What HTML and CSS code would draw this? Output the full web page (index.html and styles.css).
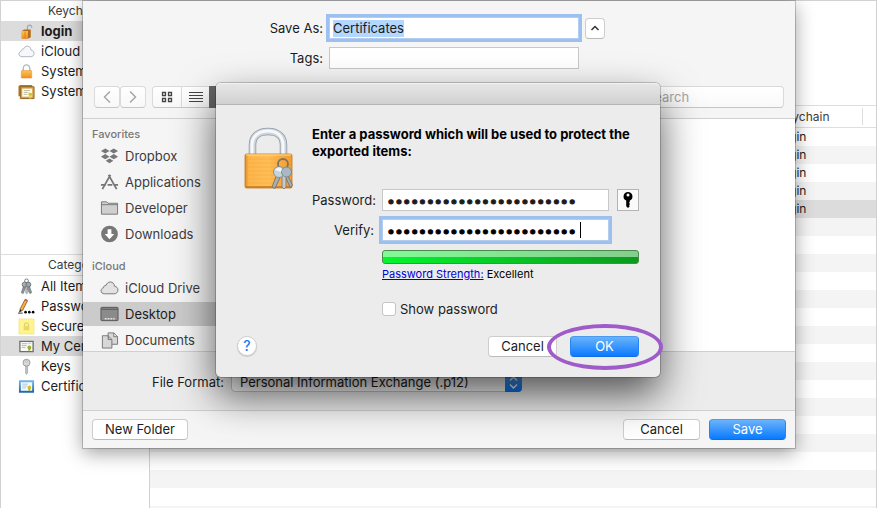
FILE: index.html
```html
<!DOCTYPE html>
<html lang="en">
<head>
<meta charset="utf-8">
<title>Keychain Access</title>
<link rel="stylesheet" href="styles.css">
</head>
<body>
<svg class="defs" aria-hidden="true">
  <defs>
    <linearGradient id="gold" x1="0" x2="0" y1="0" y2="1"><stop offset="0" stop-color="#ffc356"/><stop offset="1" stop-color="#f08d1c"/></linearGradient>
    <linearGradient id="goldside" x1="0" x2="1" y1="0" y2="0"><stop offset="0" stop-color="#d98a24"/><stop offset=".08" stop-color="#fdb64a"/><stop offset=".5" stop-color="#ffbe55"/><stop offset="1" stop-color="#f09a2c"/></linearGradient>
    <linearGradient id="blue" x1="0" x2="0" y1="0" y2="1"><stop offset="0" stop-color="#6fb3ef"/><stop offset="1" stop-color="#2467ae"/></linearGradient>
    <symbol id="cloud" viewBox="0 0 18 14"><path d="M4.3 12.5C2.3 12.5 1 11.3 1 9.6 1 8.1 2 7 3.4 6.8 3.3 5.2 4.4 4.3 5.8 4.5 6.4 2.6 7.9 1.3 9.7 1.3c2.3 0 4 1.7 4 4.1 2 .1 3.3 1.6 3.3 3.5 0 2.1-1.5 3.6-3.6 3.6z"/></symbol>
  </defs>
</svg>

<main class="window">
  <aside class="sidebar">
    <section class="keychains">
      <h2>Keychains</h2>
      <ul>
        <li class="selected"><svg viewBox="0 0 16 18"><path d="M9 8V4a2.300 2.300 0 0 1 4.500 0v1" fill="none" stroke="#9aa7b6" stroke-width="1.300"/><path d="M3 8.500L5.500 7h7v8L10 16.500H3z" fill="#b56a17"/><path d="M3 8.500h6.500v8H3z" fill="url(#gold)"/><path d="M6.500 9v7" stroke="#c97a1c" stroke-width=".8"/></svg>login</li>
        <li><svg viewBox="0 0 18 14"><use href="#cloud" fill="#f5f7fa" stroke="#acb3be"/></svg>iCloud</li>
        <li><svg viewBox="0 0 16 18"><path d="M4.500 9V6a3.500 4 0 0 1 7 0v3" fill="none" stroke="#aeb8c4" stroke-width="1.500"/><rect x="2.500" y="8" width="11" height="8" rx=".5" fill="url(#gold)" stroke="#dd8c27" stroke-width=".5"/></svg>System</li>
        <li><svg viewBox="0 0 18 18"><path d="M.500 3.500L2 2h13v12H.500z" fill="#ae7929"/><path d="M2.500 4h14.500v12.500H2.500z" fill="#d3a148" stroke="#93641e"/><path d="M4.500 6h10.500v8.500H4.500z" fill="#fffef2"/><path d="M6 8h7M6 10h5M6 12h4" stroke="#b9b9a5"/><circle cx="13" cy="12" r="2" fill="#cfc23b"/><path d="M12 13v4l1-1 1 1v-4" fill="#e3ce55"/></svg>System Roots</li>
      </ul>
    </section>
    <section class="categories">
      <h2>Category</h2>
      <ul>
        <li><svg viewBox="0 0 18 18"><circle cx="9" cy="3" r="2" fill="none" stroke="#777" stroke-width="1"/><path d="M6 8L3.500 15.500l2 1 3-7.500 4 7.500 2-1L11.500 7z" fill="#8d9498" stroke="#60676b" stroke-width=".6"/><circle cx="7" cy="7" r="2.600" fill="#a8afb3" stroke="#5d6568" stroke-width=".8"/><circle cx="11" cy="7" r="2.600" fill="#9da5a9" stroke="#5d6568" stroke-width=".8"/><path d="M8.200 9v7l1 1 .8-1V9z" fill="#bcc3c7" stroke="#737b7e" stroke-width=".5"/></svg>All Items</li>
        <li><svg viewBox="0 0 18 18"><path d="M1.500 15l1-4L7.500 1.500l2.500 1.500L5 13z" fill="#f6b238" stroke="#7a4d21" stroke-width=".8"/><path d="M7 2.300L8 .800l2.500 1.500-1 1.500z" fill="#d85548"/><path d="M1.500 15l1-3 1.500 1z" fill="#222"/><path d="M0 16h5" stroke="#333"/><circle cx="8" cy="15" r="1.400"/><circle cx="12" cy="15" r="1.400"/><circle cx="16" cy="15" r="1.400"/></svg>Passwords</li>
        <li><svg viewBox="0 0 18 18"><path d="M1 1h16v16H1z" fill="#fff58c" stroke="#eadf7c" stroke-width=".6"/><path d="M7 9V7a2 2 0 0 1 4 0v2" fill="none" stroke="#d9d07a" stroke-width="1.200"/><path d="M6 8.500h6v4.500H6z" fill="#ead76c"/></svg>Secure Notes</li>
        <li class="selected"><svg viewBox="0 0 18 18"><path d="M2 3.500h14v11H2z" fill="#f8f8f4" stroke="#6d706e" stroke-width="1.400"/><path d="M4 6h6M4 8h5M4 10h4" stroke="#b2b9ba"/><path d="M11 5.500h3" stroke="#b5bbbb"/><circle cx="12" cy="10" r="2" fill="#9ead36"/><path d="M11 11v3l1-1 1 1v-3" fill="#9aa438"/></svg>My Certificates</li>
        <li><svg viewBox="0 0 18 18"><path d="M8 7h2.200v9L9 17.500 8 16z" fill="#bfc2c4" stroke="#84888a" stroke-width=".5"/><circle cx="9" cy="5" r="3.700" fill="#d6d8da" stroke="#868a8d" stroke-width=".8"/><circle cx="9" cy="3.500" r="1" fill="#fff" stroke="#888" stroke-width=".5"/></svg>Keys</li>
        <li><svg viewBox="0 0 18 18"><path d="M2 3.500h14v11H2z" fill="#f7fcff" stroke="url(#blue)" stroke-width="2"/><path d="M4.500 6.500h6M4.500 8.500h5M4.500 10.500h4" stroke="#a9c2d8"/><circle cx="12" cy="10" r="2" fill="#c9c63a"/><path d="M11 11v3l1-1 1 1v-3" fill="#acae37"/></svg>Certificates</li>
      </ul>
    </section>
  </aside>
  <section class="content">
    <table>
      <thead><tr><th></th><th class="kc">Keychain</th><th class="end"></th></tr></thead>
      <tbody>
        <tr><td></td><td class="kc">login</td><td></td></tr>
        <tr><td></td><td class="kc">login</td><td></td></tr>
        <tr><td></td><td class="kc">login</td><td></td></tr>
        <tr><td></td><td class="kc">login</td><td></td></tr>
        <tr class="selected"><td></td><td class="kc">login</td><td></td></tr>
      </tbody>
    </table>
    <div class="stripes"></div>
  </section>
</main>

<section class="sheet" aria-label="Save">
  <form class="save-form">
    <label for="saveas">Save As:</label>
    <input id="saveas" class="field focus highlighted" type="text" value="Certificates">
    <button type="button" class="btn collapse" aria-label="Collapse"><svg viewBox="0 0 10 8"><path d="M1.500 6L5 2.500 8.500 6" fill="none" stroke="#333" stroke-width="1.500"/></svg></button>
    <label for="tags">Tags:</label>
    <input id="tags" class="field" type="text">
  </form>
  <div class="toolbar">
    <div class="nav">
      <button type="button" aria-label="Back"><svg viewBox="0 0 10 14"><path d="M8 1.500L2.500 7 8 12.500" fill="none" stroke="#a6a6a6" stroke-width="1.500"/></svg></button>
      <button type="button" aria-label="Forward"><svg viewBox="0 0 10 14"><path d="M2 1.500L7.500 7 2 12.500" fill="none" stroke="#a6a6a6" stroke-width="1.500"/></svg></button>
    </div>
    <div class="views">
      <button type="button" aria-label="Icons"><svg viewBox="0 0 12 12"><path d="M1.500 1.500h3v3h-3zM7.500 1.500h3v3h-3zM1.500 7.500h3v3h-3zM7.500 7.500h3v3h-3z" fill="none" stroke="#444" stroke-width="1.300"/></svg></button>
      <button type="button" aria-label="List"><svg class="list" viewBox="0 0 14 12"><path d="M0 1.500h14M0 4.500h14M0 7.500h14M0 10.500h14" stroke="#444"/></svg></button>
      <button type="button" class="on" aria-label="Columns"><svg class="list" viewBox="0 0 14 12"><path d="M.5.500h13v11H.5zM5 1v10M9.500 1v10" fill="none" stroke="#fff"/></svg></button>
    </div>
    <input class="search" type="text" placeholder="Search" aria-label="Search">
  </div>
  <div class="browser">
    <nav class="places">
      <h3>Favorites</h3>
      <a href="#"><svg viewBox="0 0 20 18" fill="#777"><path d="M5.500 1L1 3.700l4.500 2.700L10 3.700zM14.500 1L10 3.700l4.500 2.700L19 3.700zM5.500 7L1 9.700l4.500 2.700L10 9.700zM14.500 7L10 9.700l4.500 2.700L19 9.700zM10 11.500l-4 2.500 4 2.700 4-2.700z"/></svg>Dropbox</a>
      <a href="#"><svg viewBox="0 0 20 18" fill="none" stroke="#777"><path d="M9 1.500l8.500 15M11 1.500L2.500 16.500" stroke-width="1.900"/><path d="M1 12h5M8 12h5M15 12h4" stroke-width="1.800"/></svg>Applications</a>
      <a href="#"><svg viewBox="0 0 20 18" fill="#cfcfcf" stroke="#777"><path d="M1.500 15.500v-13h5.500l1.500 1.500h10v11.500zM1.500 5.500h17"/></svg>Developer</a>
      <a href="#"><svg viewBox="0 0 20 18"><circle cx="10" cy="9" r="8.800" fill="#777"/><path d="M8 4h4v5h3l-5 5.500L5 9h3z" fill="#fff"/></svg>Downloads</a>
      <h3 class="next">iCloud</h3>
      <a href="#"><svg viewBox="0 0 18 14"><use href="#cloud" fill="#e2e2e2" stroke="#777" stroke-width=".9"/></svg>iCloud Drive</a>
      <a href="#" class="selected"><svg viewBox="0 0 20 18"><rect x="1" y="2" width="18" height="14" rx="1" fill="#8b8b8b" stroke="#555"/><path d="M1.500 4h17" stroke="#555"/><path d="M5 14h2M8 14h2M11 14h2M14 14h1.500" stroke="#e5e5e5" stroke-width="1.500"/></svg>Desktop</a>
      <a href="#"><svg viewBox="0 0 20 18" fill="#d7d7d7" stroke="#777"><path d="M8.500 1.500h6l4 4v8h-10zM14.500 1.500v4h4"/><path d="M2.500 4.500h6l4 4v9h-10zM8.500 4.500v4h4"/></svg>Documents</a>
    </nav>
    <div class="files"></div>
  </div>
  <div class="format">
    <label for="format">File Format:</label>
    <span class="picker">
      <select id="format"><option>Personal Information Exchange (.p12)</option></select>
      <svg viewBox="0 0 17 19"><path d="M5 7.500l3.500-3.500L12 7.500M5 11.500l3.500 3.500 3.500-3.500" fill="none" stroke="#fff" stroke-width="1.500"/></svg>
    </span>
  </div>
  <footer>
    <button type="button" class="btn new">New Folder</button>
    <button type="button" class="btn wide">Cancel</button>
    <button type="button" class="btn wide primary">Save</button>
  </footer>
</section>

<div class="layer">
  <section class="dialog" role="dialog" aria-labelledby="prompt">
    <div class="titlebar"></div>
    <div class="dialog-body">
      <svg class="lock" viewBox="0 0 49 64">
        <path d="M8.500 29V19C8.500 10 15 5.500 24 5.500S39.500 10 39.500 19v10" fill="none" stroke="#8f97a1" stroke-width="7.500"/>
        <path d="M8.500 29V19C8.500 10 15 5.500 24 5.500S39.500 10 39.500 19v10" fill="none" stroke="#cdd4dc" stroke-width="6"/>
        <path d="M8 29V19C8 10 15 5 24 5S39 10 39 19v10" fill="none" stroke="#f6f8fb" stroke-width="3"/>
        <rect x="1" y="28" width="47" height="34" rx="1.500" fill="url(#goldside)" stroke="#c97a1c" stroke-width=".8"/>
        <path d="M2 29h45" stroke="#ffdc97" stroke-width="1.200"/>
        <path d="M2 33h45M2 37h45M2 41h45M2 45h45M2 49h45M2 53h45M2 57h45" stroke="#f5aa42" stroke-width=".6"/>
        <path d="M2 61h45" stroke="#c6761c" stroke-width="1.500"/>
        <circle cx="39" cy="38" r="5" fill="none" stroke="#7c7462" stroke-width="1.800"/>
        <path d="M33 48l-5 13 3 1.500 6-13zM43 48l5.500 11-2 3-6-13z" fill="#a8adb1" stroke="#6b6b69" stroke-width=".8"/>
        <path d="M38 47h4v14l-2 2-2-2z" fill="#c5c9cc" stroke="#757674" stroke-width=".8"/>
        <circle cx="35" cy="46" r="5.500" fill="#c5d3dc" stroke="#7c858b" stroke-width=".8"/>
        <circle cx="42.500" cy="46" r="5" fill="#a9b9c3" stroke="#737f86" stroke-width=".8"/>
        <path d="M31 44c2-3 5-3 7-1l-1 3c-2-1-4-1-6-2z" fill="#eff5f8"/>
      </svg>
      <form class="credentials">
        <h1 id="prompt">Enter a password which will be used to protect the exported items:</h1>
        <div class="rows">
          <label for="pw">Password:</label>
          <input id="pw" class="field secret" type="password" value="abcdefghijklmnopqrstuvwx">
          <button type="button" class="key" aria-label="Password Assistant"><svg viewBox="0 0 12 18"><path fill-rule="evenodd" d="M6 1a4.500 4.500 0 0 1 1.800 8.600V11l-.8.800.8.900v.800l-.8.800.8.900-1.800 1.800-1.800-1.800V9.600A4.500 4.500 0 0 1 6 1zM6 2.500a1.500 1.500 0 1 0 0 3 1.500 1.500 0 1 0 0-3z"/></svg></button>
          <label for="verify">Verify:</label>
          <span class="verify"><input id="verify" class="field secret focus" type="password" value="abcdefghijklmnopqrstuvwx"><i class="caret"></i></span>
        </div>
        <div class="indent">
          <div class="meter" role="meter" aria-label="Password strength" aria-valuenow="100"></div>
          <p class="strength"><a href="#">Password Strength:</a> Excellent</p>
          <label class="show"><input type="checkbox">Show password</label>
        </div>
      </form>
    </div>
    <footer>
      <button type="button" class="help" aria-label="Help">?</button>
      <button type="button" class="btn cancel">Cancel</button>
      <span class="ok"><button type="button" class="btn primary">OK</button><span class="ring"></span></span>
    </footer>
  </section>
</div>
</body>
</html>
```
FILE: styles.css
```css
* { box-sizing: border-box; }
body {
  margin: 0;
  position: relative;
  min-height: 100vh;
  overflow: hidden;
  font: 13px/20px Inter, "Liberation Sans", sans-serif;
  color: #1c1c1c;
  background: #fff;
}
h1, h2, h3, p, ul { margin: 0; padding: 0; }
ul { list-style: none; }
button, input, select { font: inherit; color: inherit; margin: 0; padding: 0; }
svg { flex: none; display: block; }
.defs { position: absolute; width: 0; height: 0; }

/* Main window */
.window {
  display: flex;
  height: 100vh;
  border: 1px solid #d2d2d2;
  border-bottom: 0;
}
.sidebar { width: 149px; flex: none; border-right: 1px solid #d2d2d2; overflow: hidden; }
.sidebar h2 { font-size: 12px; font-weight: 400; line-height: 20px; padding-left: 47px; color: #3c3c3c; }
.sidebar li { display: flex; align-items: center; gap: 6px; height: 20px; padding-left: 17px; white-space: nowrap; }
.sidebar li svg { width: 17px; height: 17px; }
.sidebar .selected { background: #dcdcdc; }
.keychains { height: 253px; }
.keychains h2 { height: 20px; }
.keychains .selected { font-weight: 700; }
.categories { border-top: 1px solid #dedede; }
.categories h2 { height: 21px; border-bottom: 1px solid #dedede; }
.content { flex: 1; display: flex; flex-direction: column; padding-top: 104px; min-width: 0; }
table { width: 100%; border-collapse: separate; border-spacing: 0; table-layout: fixed; font-size: 12px; }
th { height: 23px; padding: 0; font-weight: 400; line-height: 20px; text-align: left; border: solid #dedede; border-width: 1px 0; color: #3c3c3c; }
td { height: 18px; padding: 0; line-height: 18px; }
.kc { width: 85px; padding-left: 1px; }
td.kc { padding-left: 2px; }
th.end { background: linear-gradient(#dedede, #dedede) 0 50% / 1px 17px no-repeat; }
tr > :last-child { width: 14px; }
tbody tr:nth-child(even) { background: #f4f4f4; }
tbody tr.selected { background: #dcdcdc; }
.stripes { flex: 1; background: repeating-linear-gradient(#f4f4f4 0 18px, #fff 18px 36px); }

/* Shared controls */
.field { height: 22px; padding: 0 4px; border: 1px solid #c8c8c8; border-radius: 0; background: #fff; outline: 0; }
.focus { box-shadow: 0 0 0 3px #9cc0f0; border-color: #b4cdee; }
.highlighted { background: linear-gradient(#b3d7ff, #b3d7ff) 3px 2px / 71px 17px no-repeat #fff; padding: 0 3px; }
.btn {
  height: 21px;
  line-height: 19px;
  border: 1px solid #cdcdcd;
  border-bottom-color: #bababa;
  border-radius: 4px;
  background: #fff;
  text-align: center;
}
.primary { color: #fff; border-color: #4b9bf5 #2585f6 #0f6de8; background: linear-gradient(#6ab3fa, #0a7aff); }

/* Save sheet */
.sheet {
  position: absolute;
  top: 1px;
  left: 83px;
  right: 82px;
  background: #f5f5f5;
  box-shadow: 0 0 0 1px rgba(0, 0, 0, .2), 0 5px 18px rgba(0, 0, 0, .38);
}
.save-form {
  display: grid;
  grid-template-columns: minmax(0, 1fr) 250px minmax(0, 1fr);
  gap: 8px 6px;
  padding: 16px 0 0 30px;
  align-items: center;
}
.save-form label { text-align: right; }
.collapse { width: 20px; display: grid; place-items: center; }
.collapse svg { width: 10px; height: 8px; }
.toolbar { display: flex; padding: 17px 11px 10px; border-bottom: 1px solid #d0d0d0; }
.toolbar button { height: 22px; display: grid; place-items: center; border: 1px solid #dadada; border-bottom-color: #c6c6c6; border-radius: 4px; background: linear-gradient(#fff, #f8f8f8); }
.nav { display: flex; margin-right: 6px; }
.nav button { width: 26px; }
.nav svg { width: 10px; height: 14px; }
.views { display: flex; flex: none; }
.views button { width: 29px; border-radius: 0; margin-right: -1px; }
.views button:first-child { width: 30px; border-radius: 4px 0 0 4px; }
.views svg { width: 12px; height: 12px; }
.views .list { width: 14px; }
.views .on { background: #666; border-color: #666; }
.search { height: 22px; width: 150px; margin-left: auto; padding-left: 11px; border: 1px solid #dadada; border-bottom-color: #c6c6c6; border-radius: 4px; background: linear-gradient(#fff, #f9f9f9); }
.search::placeholder { color: #a6a6a6; opacity: 1; }
.browser { display: flex; height: 232px; overflow: hidden; }
.places { width: 160px; flex: none; padding-top: 5px; border-right: 1px solid #ccc; background: #f5f5f5; }
.places h3 { height: 18px; padding-left: 9px; font-size: 11px; line-height: 20px; font-weight: 500; color: #777; }
.places .next { margin-top: 10px; }
.places a { display: flex; align-items: center; gap: 6px; height: 24px; margin: 2px 0; padding-left: 17px; color: #3c3c3c; text-decoration: none; white-space: nowrap; }
.places a svg { width: 19px; height: 18px; }
.places .selected { background: #cbcbcb; color: #1c1c1c; }
.files { flex: 1; background: #fff; }
.format { display: flex; align-items: center; gap: 7px; height: 60px; padding: 2px 0 0 69px; background: #ececec; border: solid #d0d0d0; border-width: 1px 0; }
.picker { position: relative; width: 291px; }
.picker select { display: block; width: 100%; height: 19px; padding-left: 8px; border: 1px solid #c6c6c6; border-radius: 4px; background: #fff; appearance: none; line-height: 17px; }
.picker svg { position: absolute; right: 0; top: 0; width: 17px; height: 19px; border-radius: 0 4px 4px 0; background: linear-gradient(#5ca9f8, #0a72f0); pointer-events: none; }
.sheet footer { display: flex; gap: 9px; padding: 8px 9px; }
.new { width: 96px; margin-right: auto; }
.wide { width: 77px; }

/* Password dialog */
.layer { position: absolute; top: 83px; left: 0; right: 1px; display: flex; justify-content: center; }
.dialog { width: 444px; border-radius: 5px; background: #ececec; box-shadow: 0 0 0 1px rgba(0, 0, 0, .2), 0 18px 40px rgba(0, 0, 0, .65); }
.titlebar { height: 22px; border-radius: 5px 5px 0 0; border-bottom: 1px solid #b6b6b6; border-top: 1px solid #f2f2f2; background: linear-gradient(#e6e6e6, #d1d1d1); }
.dialog-body { display: flex; gap: 19px; padding: 21px 21px 0 28px; }
.lock { width: 49px; height: 64px; }
.credentials { flex: 1; min-width: 0; }
h1 { font-size: 13px; line-height: 17px; font-weight: 700; color: #000; }
.rows { display: grid; grid-template-columns: 62px 1fr 22px; gap: 8px; align-items: center; margin-top: 29px; }
.rows label { text-align: right; white-space: nowrap; }
.secret { width: 100%; display: block; font-size: 14px; -webkit-text-stroke: 1px #1c1c1c; }
.secret.focus { color: #000; -webkit-text-stroke-color: #000; }
.key { height: 22px; display: grid; place-items: center; border: 1px solid #b4b4b4; background: #fafafa; }
.key svg { width: 12px; height: 18px; }
.verify { position: relative; }
.caret { position: absolute; left: 198px; top: 3px; width: 1px; height: 16px; background: #000; }
.indent { padding-left: 70px; }
.meter { height: 14px; margin-top: 9px; border: 1px solid #4c8a4b; border-radius: 3px; background: linear-gradient(rgba(255, 255, 255, .5) 0 50%, rgba(255, 255, 255, 0) 50%), linear-gradient(90deg, #05f52d, #0a9a1d); }
.strength { margin-top: 2px; font-size: 11px; line-height: 16px; color: #000; }
.strength a { color: #0000d6; }
.show { display: flex; align-items: center; gap: 4px; margin-top: 17px; }
.show input { appearance: none; width: 14px; height: 14px; border: 1px solid #c4c4c4; border-radius: 3px; background: #fff; }
.dialog footer { display: flex; padding: 17px 21px 20px; }
.help { width: 20px; height: 20px; border: 1px solid #cfcfcf; border-radius: 50%; background: #fff; box-shadow: 0 1px 1px rgba(0, 0, 0, .15); line-height: 18px; color: #1a7cf2; font-size: 14px; font-weight: 500; }
.cancel { width: 69px; margin-left: auto; margin-right: 13px; }
.ok { position: relative; }
.ok .btn { width: 69px; display: block; }
.ring { position: absolute; inset: -12px -24px -13px -23px; border: 4px solid #9f5bc9; border-radius: 50%; pointer-events: none; }
```
